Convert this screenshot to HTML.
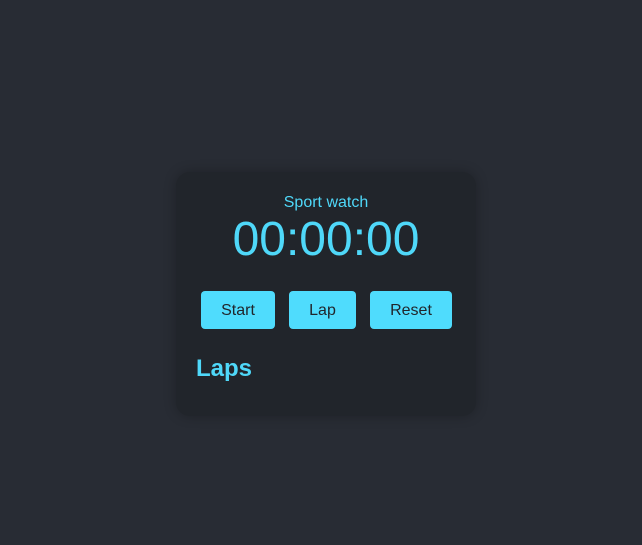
<!DOCTYPE html>
<html><head><style>
html,body{margin:0;padding:0;width:642px;height:545px;background:#282c34;font-family:"Liberation Sans",sans-serif;overflow:hidden}
.card{position:absolute;left:176px;top:172px;width:300px;height:244px;background:#21252b;border-radius:14px;box-shadow:0 0 12px rgba(0,0,0,0.25)}
.t{position:absolute;left:0;width:642px;text-align:center;color:#4fd8f9}
.b{position:absolute;top:291px;height:38px;background:#4fdcfd;border-radius:4px;color:#21252b;font-size:16px;line-height:40px;text-align:center}
</style></head><body>
<div class="card"></div>
<div class="t" style="top:193px;font-size:16px;line-height:19px;left:5px">Sport watch</div>
<div class="t" style="top:213px;font-size:48px;line-height:54px;left:5px">00:00:00</div>
<div class="b" style="left:201px;width:74px">Start</div>
<div class="b" style="left:289px;width:67px">Lap</div>
<div class="b" style="left:370px;width:82px">Reset</div>
<div style="position:absolute;left:196px;top:355px;font-size:24px;font-weight:bold;color:#4fd8f9;line-height:28px">Laps</div>
</body></html>
